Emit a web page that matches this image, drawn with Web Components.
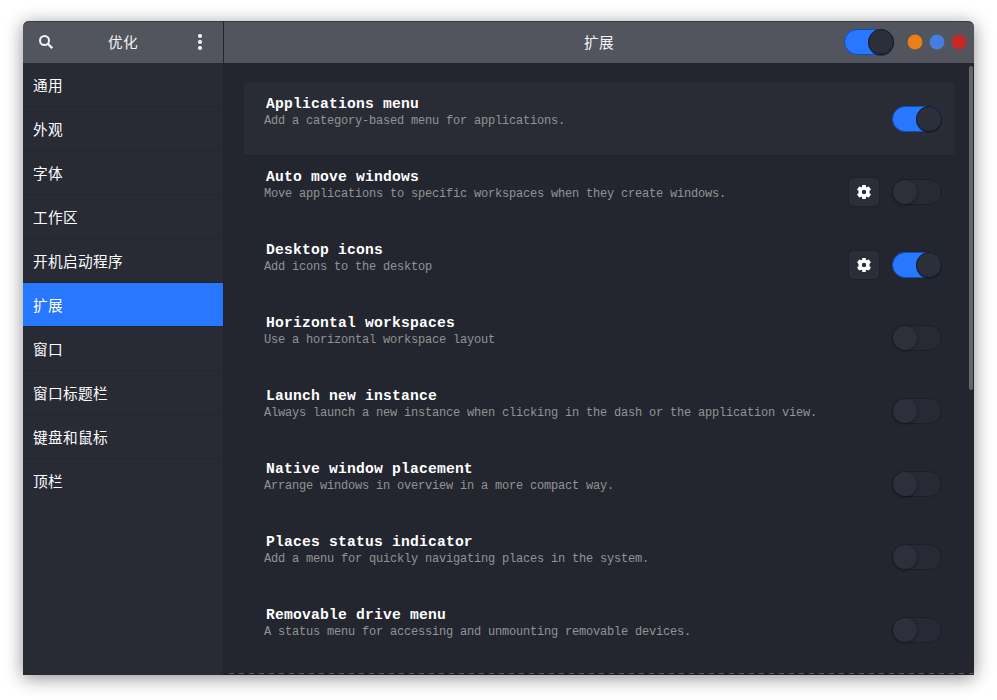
<!DOCTYPE html>
<html lang="zh-CN">
<head>
<meta charset="utf-8">
<title>优化</title>
<style>
html,body{margin:0;padding:0;background:#fff}
body{width:997px;height:700px;overflow:hidden;font-family:"Liberation Mono","Noto Sans CJK SC",monospace;color:#fff}
</style>
</head>
<body>
<tweaks-window></tweaks-window>
<script>
const define = (name, html, setup) => {
  const t = document.createElement('template');
  t.innerHTML = html;
  customElements.define(name, class extends HTMLElement {
    constructor() {
      super();
      this.attachShadow({mode: 'open'}).append(t.content.cloneNode(true));
    }
    connectedCallback() { if (setup) setup(this, this.shadowRoot); }
  });
};

define('toggle-switch', `
<style>
:host{display:block;flex:none;width:50px;height:26px}
.track{box-sizing:border-box;width:50px;height:26px;border-radius:13px;border:1px solid #1c1f26;background:#272a34;display:flex}
.knob{box-sizing:border-box;width:24px;height:24px;border-radius:50%;background:#2d303a;box-shadow:0 1px 2px 1px rgba(0,0,0,.22)}
:host([on]) .track{background:#2777ff;border-color:#104eb8;justify-content:flex-end}
:host([on]) .knob{width:26px;height:26px;margin:-1px -1px 0 0;border:1px solid #10192b;background:#2b2f39;box-shadow:0 1px 0 rgba(10,15,28,.5)}
</style>
<div class="track"><div class="knob"></div></div>`);

define('gear-button', `
<style>
:host{display:flex;box-sizing:border-box;flex:none;width:32px;height:30px;border:1px solid #1e2028;border-radius:5px;background:#2b2e38;align-items:center;justify-content:center}
svg{display:block}
</style>
<svg width="14" height="14" viewBox="0 0 14 14"><path fill="#fff" fill-rule="evenodd" d="M5.200 0h3.600v1.800l1 .5 2-.9 2.200 3.200-1.500 1.100v2.600l1.500 1.100-2.200 3.200-2-.9-1 .5V14H5.200v-1.800l-1-.5-2 .9L0 9.400l1.500-1.100V5.700L0 4.600l2.200-3.200 2 .9 1-.5zM7 4.800a2.200 2.200 0 1 0 0 4.400 2.200 2.200 0 0 0 0-4.400z"/></svg>`);

define('window-dot', `
<style>:host{display:block;width:14px;height:14px;border-radius:50%;box-shadow:0 0 0 .4px var(--dot);background:var(--dot)}</style>`,
(h) => h.style.setProperty('--dot', h.getAttribute('color')));

define('side-item', `
<style>
:host{display:flex;box-sizing:border-box;height:44px;padding:0 10px 0;border-bottom:1px solid #242730;align-items:center;font-size:14.667px;letter-spacing:.333px;line-height:22px}
:host([selected]){background:#2777ff;background-clip:padding-box}
:host(:last-of-type){border-color:transparent}
span{display:block;padding-top:5px}
</style><span><slot></slot></span>`);

define('extension-row', `
<style>
:host{display:flex;box-sizing:border-box;height:73px;border-bottom:1px solid #20232a;padding:0 12px 0 20px;align-items:flex-start}
:host([hover]){background:#292c34;background-clip:padding-box}
.text{flex:1;padding-top:13px;white-space:nowrap}
.name{font-size:14.667px;letter-spacing:.199px;line-height:17px;font-weight:bold;padding-left:2px}
.desc{font-size:12px;letter-spacing:-.2012px;line-height:14px;color:#929396;padding-top:1px}
.tools{display:flex;gap:12px;height:72px;align-items:center}
</style>
<div class="text"><div class="name"><slot></slot></div><div class="desc"><slot name="desc"></slot></div></div>
<div class="tools"></div>`,
(h, r) => {
  const tools = r.querySelector('.tools');
  if (h.hasAttribute('settings')) tools.append(document.createElement('gear-button'));
  const s = document.createElement('toggle-switch');
  if (h.hasAttribute('on')) s.setAttribute('on', '');
  tools.append(s);
});

define('header-bar', `
<style>
:host{display:grid;grid-template-columns:200px 1fr;height:42px;background:#52555d;box-shadow:inset 0 1px #3a3d45;border-radius:6px 6px 0 0;font-size:14.667px;letter-spacing:.333px;color:#f4f4f5}
.left{display:grid;grid-template-columns:46px 1fr 46px;align-items:center;justify-items:center}
.right{border-left:1px solid #22252d;display:grid;grid-template-columns:1fr 130px;align-items:center}
.title{text-align:center;line-height:22px;padding-top:3px}
.right .title{padding-left:130px;box-sizing:border-box}
.controls{display:flex;align-items:center}
window-dot{margin-right:8px}
toggle-switch{margin-right:14px}
svg{display:block}
</style>
<div class="left">
<svg width="14" height="14" viewBox="0 0 14 14" fill="none" stroke="#f2f2f3"><circle cx="5.5" cy="5.5" r="4.5" stroke-width="2"/><path d="M8.8 8.8l4.4 4.4" stroke-width="2.3"/></svg>
<div class="title">优化</div>
<svg width="4" height="16" viewBox="0 0 4 16" fill="#f2f2f3"><circle cx="2" cy="2" r="2.05"/><circle cx="2" cy="8" r="2.05"/><circle cx="2" cy="14" r="2.05"/></svg>
</div>
<div class="right">
<div class="title">扩展</div>
<div class="controls"><toggle-switch on></toggle-switch><window-dot color="#e97f16"></window-dot><window-dot color="#457ee0"></window-dot><window-dot color="#c62828"></window-dot></div>
</div>`);

define('side-list', `
<style>:host{display:block;background:#282a34;border-right:1px solid #20232a}</style>
<side-item>通用</side-item><side-item>外观</side-item><side-item>字体</side-item><side-item>工作区</side-item><side-item>开机启动程序</side-item><side-item selected>扩展</side-item><side-item>窗口</side-item><side-item>窗口标题栏</side-item><side-item>键盘和鼠标</side-item><side-item>顶栏</side-item>`);

define('extension-list', `
<style>
:host{display:grid;grid-template-columns:1fr 5px;grid-template-rows:610px 1px 1px;background:#23262e;overflow:hidden}
.rows{padding:20px 15px 0 20px}
.thumb{width:4px;height:324px;margin-top:3px;border-radius:2px;background:#65656c}
.dash{grid-column:1/3;height:1px;margin-left:0;background:repeating-linear-gradient(90deg,#1d1f28 0 5px,#5c5e64 5px 10px)}
.foot{grid-column:1/3;background:#1d1f28}
</style>
<div class="rows">
<extension-row hover on>Applications menu<span slot="desc">Add a category-based menu for applications.</span></extension-row>
<extension-row settings>Auto move windows<span slot="desc">Move applications to specific workspaces when they create windows.</span></extension-row>
<extension-row settings on>Desktop icons<span slot="desc">Add icons to the desktop</span></extension-row>
<extension-row>Horizontal workspaces<span slot="desc">Use a horizontal workspace layout</span></extension-row>
<extension-row>Launch new instance<span slot="desc">Always launch a new instance when clicking in the dash or the application view.</span></extension-row>
<extension-row>Native window placement<span slot="desc">Arrange windows in overview in a more compact way.</span></extension-row>
<extension-row>Places status indicator<span slot="desc">Add a menu for quickly navigating places in the system.</span></extension-row>
<extension-row>Removable drive menu<span slot="desc">A status menu for accessing and unmounting removable devices.</span></extension-row>
</div>
<div class="thumb"></div>
<div class="dash"></div>
<div class="foot"></div>`);

define('tweaks-window', `
<style>
:host{display:block;width:951px;height:654px;margin:21px 0 0 23px;border-radius:6px 6px 0 0;box-shadow:0 3px 18px rgba(15,8,12,.46)}
.body{display:grid;grid-template-columns:201px 1fr;height:612px}
</style>
<header-bar></header-bar>
<div class="body"><side-list></side-list><extension-list></extension-list></div>`);
</script>
</body>
</html>
